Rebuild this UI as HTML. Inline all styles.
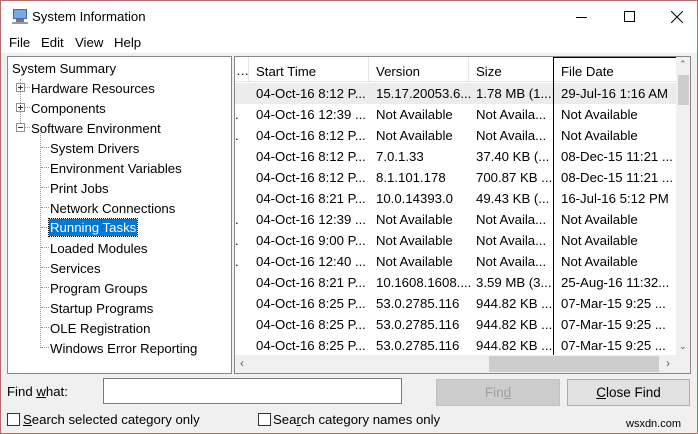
<!DOCTYPE html>
<html><head><style>
*{margin:0;padding:0;box-sizing:border-box}
body{width:698px;height:434px;overflow:hidden;background:#f0f0f0;font-family:"Liberation Sans",sans-serif;font-size:13.2px;color:#000;position:relative}
.a{position:absolute;white-space:nowrap}
#win{position:absolute;left:0;top:0;width:698px;height:434px;border:1px solid #b86a6a}
#title{position:absolute;left:1px;top:1px;width:696px;height:32px;background:#fff}
#menu{position:absolute;left:1px;top:33px;width:696px;height:20px;background:#fff}
#tree{position:absolute;left:7px;top:56px;width:225px;height:318px;background:#fff;border:1px solid #828790}
#list{position:absolute;left:234px;top:56px;width:457px;height:318px;background:#fff;border:1px solid #828790;overflow:hidden}
.t{position:absolute;white-space:nowrap}
.pm{position:absolute;width:9px;height:9px;border:1px solid #919191;background:#fff}
.pm:before{content:"";position:absolute;left:1px;top:3px;width:5px;height:1px;background:#333}
.pm.p:after{content:"";position:absolute;left:3px;top:1px;width:1px;height:5px;background:#333}
.dv{position:absolute;border-left:1px dotted #999;width:0}
.dh{position:absolute;border-top:1px dotted #999;height:0;width:8px}
.row{position:absolute;left:0;width:441px;height:21px}
.row span{position:absolute;top:3px;white-space:nowrap}
.btn{position:absolute;border:1px solid #adadad;background:#e1e1e1;text-align:center;line-height:25px;font-size:13.5px}
.cb{position:absolute;width:13px;height:13px;border:1px solid #333;background:#fff}
</style></head><body>
<div id="win"></div>
<div id="title">
 <svg class="a" style="left:10px;top:7px" width="18" height="16"><rect x="2" y="1" width="14" height="10" fill="#3a6ab0"/><rect x="3" y="2" width="12" height="8" fill="#7aa8e0"/><rect x="5" y="11" width="8" height="3" fill="#777"/><rect x="1" y="14" width="16" height="2" fill="#999"/></svg>
 <div class="a" style="left:31px;top:8px;font-size:13.2px">System Information</div>
 <div class="a" style="left:575px;top:16px;width:11px;height:1px;background:#000"></div>
 <div class="a" style="left:623px;top:10px;width:11px;height:11px;border:1px solid #000"></div>
 <svg class="a" style="left:670px;top:10px" width="12" height="12"><path d="M0 0L12 12M12 0L0 12" stroke="#000" stroke-width="1"/></svg>
</div>
<div id="menu">
 <span class="a" style="left:8px;top:2px">File</span>
 <span class="a" style="left:40px;top:2px">Edit</span>
 <span class="a" style="left:74px;top:2px">View</span>
 <span class="a" style="left:113px;top:2px">Help</span>
</div>
<div id="tree">
 <div class="t" style="left:4px;top:4px">System Summary</div>
 <div class="dv" style="left:12px;top:22px;height:50px"></div>
 <div class="pm p" style="left:8px;top:26px"></div><div class="dh" style="left:17px;top:30px;width:5px"></div><div class="t" style="left:23px;top:24px">Hardware Resources</div>
 <div class="pm p" style="left:8px;top:46px"></div><div class="dh" style="left:17px;top:50px;width:5px"></div><div class="t" style="left:23px;top:44px">Components</div>
 <div class="pm" style="left:8px;top:66px"></div><div class="dh" style="left:17px;top:70px;width:5px"></div><div class="t" style="left:23px;top:64px">Software Environment</div>
 <div class="dv" style="left:32px;top:76px;height:215px"></div>
 <div class="dh" style="left:33px;top:90px"></div><div class="t" style="left:42px;top:84px">System Drivers</div>
 <div class="dh" style="left:33px;top:110px"></div><div class="t" style="left:42px;top:104px">Environment Variables</div>
 <div class="dh" style="left:33px;top:130px"></div><div class="t" style="left:42px;top:124px">Print Jobs</div>
 <div class="dh" style="left:33px;top:150px"></div><div class="t" style="left:42px;top:144px">Network Connections</div>
 <div class="dh" style="left:33px;top:170px"></div><div class="t" style="left:41px;top:162px;background:#0078d7;color:#fff;padding:1px 1px;outline:1px dotted #000">Running Tasks</div>
 <div class="dh" style="left:33px;top:190px"></div><div class="t" style="left:42px;top:184px">Loaded Modules</div>
 <div class="dh" style="left:33px;top:210px"></div><div class="t" style="left:42px;top:204px">Services</div>
 <div class="dh" style="left:33px;top:230px"></div><div class="t" style="left:42px;top:224px">Program Groups</div>
 <div class="dh" style="left:33px;top:250px"></div><div class="t" style="left:42px;top:244px">Startup Programs</div>
 <div class="dh" style="left:33px;top:270px"></div><div class="t" style="left:42px;top:264px">OLE Registration</div>
 <div class="dh" style="left:33px;top:290px"></div><div class="t" style="left:42px;top:284px">Windows Error Reporting</div>
</div>
<div id="list">
 <div class="a" style="left:0;top:0;width:441px;height:25px;border-bottom:1px solid #e5e5e5"></div>
 <div class="a" style="left:13px;top:0;width:1px;height:25px;background:#e5e5e5"></div>
 <div class="a" style="left:133px;top:0;width:1px;height:25px;background:#e5e5e5"></div>
 <div class="a" style="left:233px;top:0;width:1px;height:25px;background:#e5e5e5"></div>
 <div class="a" style="left:1px;top:6px">…</div>
 <div class="a" style="left:21px;top:7px">Start Time</div>
 <div class="a" style="left:141px;top:7px">Version</div>
 <div class="a" style="left:241px;top:7px">Size</div>
 <div class="a" style="left:326px;top:7px">File Date</div>
 <div class="row" style="top:26px;background:#ececec"><span style="left:21px">04-Oct-16 8:12 P...</span><span style="left:141px">15.17.20053.6...</span><span style="left:241px">1.78 MB (1...</span><span style="left:326px">29-Jul-16 1:16 AM</span></div>
 <div class="row" style="top:47px"><span style="left:0">.</span><span style="left:21px">04-Oct-16 12:39 ...</span><span style="left:141px">Not Available</span><span style="left:241px">Not Availa...</span><span style="left:326px">Not Available</span></div>
 <div class="row" style="top:68px"><span style="left:0">.</span><span style="left:21px">04-Oct-16 8:12 P...</span><span style="left:141px">Not Available</span><span style="left:241px">Not Availa...</span><span style="left:326px">Not Available</span></div>
 <div class="row" style="top:89px"><span style="left:21px">04-Oct-16 8:12 P...</span><span style="left:141px">7.0.1.33</span><span style="left:241px">37.40 KB (...</span><span style="left:326px">08-Dec-15 11:21 ...</span></div>
 <div class="row" style="top:110px"><span style="left:21px">04-Oct-16 8:12 P...</span><span style="left:141px">8.1.101.178</span><span style="left:241px">700.87 KB ...</span><span style="left:326px">08-Dec-15 11:21 ...</span></div>
 <div class="row" style="top:131px"><span style="left:21px">04-Oct-16 8:21 P...</span><span style="left:141px">10.0.14393.0</span><span style="left:241px">49.43 KB (...</span><span style="left:326px">16-Jul-16 5:12 PM</span></div>
 <div class="row" style="top:152px"><span style="left:0">.</span><span style="left:21px">04-Oct-16 12:39 ...</span><span style="left:141px">Not Available</span><span style="left:241px">Not Availa...</span><span style="left:326px">Not Available</span></div>
 <div class="row" style="top:173px"><span style="left:0">.</span><span style="left:21px">04-Oct-16 9:00 P...</span><span style="left:141px">Not Available</span><span style="left:241px">Not Availa...</span><span style="left:326px">Not Available</span></div>
 <div class="row" style="top:194px"><span style="left:0">.</span><span style="left:21px">04-Oct-16 12:40 ...</span><span style="left:141px">Not Available</span><span style="left:241px">Not Availa...</span><span style="left:326px">Not Available</span></div>
 <div class="row" style="top:215px"><span style="left:21px">04-Oct-16 8:21 P...</span><span style="left:141px">10.1608.1608....</span><span style="left:241px">3.59 MB (3...</span><span style="left:326px">25-Aug-16 11:32...</span></div>
 <div class="row" style="top:236px"><span style="left:21px">04-Oct-16 8:25 P...</span><span style="left:141px">53.0.2785.116</span><span style="left:241px">944.82 KB ...</span><span style="left:326px">07-Mar-15 9:25 ...</span></div>
 <div class="row" style="top:257px"><span style="left:21px">04-Oct-16 8:25 P...</span><span style="left:141px">53.0.2785.116</span><span style="left:241px">944.82 KB ...</span><span style="left:326px">07-Mar-15 9:25 ...</span></div>
 <div class="row" style="top:278px"><span style="left:21px">04-Oct-16 8:25 P...</span><span style="left:141px">53.0.2785.116</span><span style="left:241px">944.82 KB ...</span><span style="left:326px">07-Mar-15 9:25 ...</span></div>
 <div class="a" style="left:318px;top:0;width:124px;height:299px;border:1px solid #000"></div>
 <div class="a" style="left:441px;top:0;width:15px;height:298px;background:#f0f0f0"></div>
 <div class="a" style="left:443px;top:18px;width:11px;height:30px;background:#cdcdcd"></div>
 <div class="a" style="left:444px;top:2px;font-size:9px;color:#606060">&#8963;</div>
 <div class="a" style="left:444px;top:284px;font-size:9px;color:#606060">&#8964;</div>
 <div class="a" style="left:0;top:298px;width:456px;height:18px;background:#f0f0f0"></div>
 <div class="a" style="left:254px;top:299px;width:170px;height:16px;background:#cdcdcd"></div>
 <div class="a" style="left:5px;top:299px;color:#606060;font-size:12px">&#8249;</div>
 <div class="a" style="left:431px;top:299px;color:#606060;font-size:12px">&#8250;</div>
</div>
<div class="a" style="left:7px;top:384px">Find <u>w</u>hat:</div>
<div class="a" style="left:103px;top:378px;width:299px;height:26px;background:#fff;border:1px solid #7a7a7a"></div>
<div class="btn" style="left:436px;top:379px;width:124px;height:27px;color:#a0a0a0;background:#ccc;border-color:#bfbfbf">Fin<u>d</u></div>
<div class="btn" style="left:567px;top:379px;width:123px;height:27px"><u>C</u>lose Find</div>
<div class="cb" style="left:7px;top:413px"></div>
<div class="a" style="left:23px;top:412px"><u>S</u>earch selected category only</div>
<div class="cb" style="left:258px;top:413px"></div>
<div class="a" style="left:273px;top:412px">Sea<u>r</u>ch category names only</div>
<div class="a" style="left:626px;top:418px;font-size:11px">wsxdn.com</div>
</body></html>
